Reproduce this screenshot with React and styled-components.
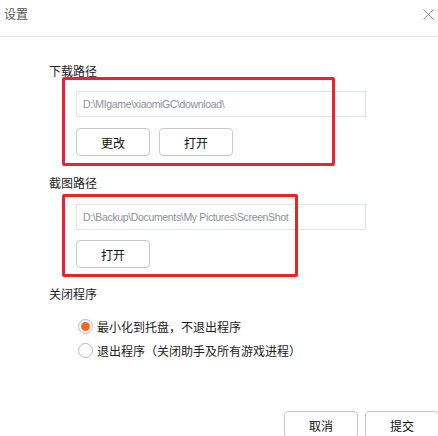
import React from 'react'
import styled, { createGlobalStyle } from 'styled-components'

const GlobalStyle = createGlobalStyle`
    html, body {
        margin: 0;
        padding: 0;
        background: #fff;
        overflow: hidden;
    }
    body {
        font-family: "Noto Sans CJK SC", "Liberation Sans", sans-serif;
        color: #222;
    }
`

const Dialog = styled.div`
    width: 438px;
    height: 436px;
    display: flex;
    flex-direction: column;
    overflow: hidden;
`

const Header = styled.div`
    height: 37px;
    border-bottom: 1px solid #e2e2e2;
    display: flex;
    align-items: flex-start;
    justify-content: space-between;
    padding: 0 4px 0 4px;
    box-sizing: border-box;
    flex-shrink: 0;
`

const Title = styled.div`
    font-size: 12px;
    line-height: 28px;
    color: #555;
`

const Close = styled.button`
    border: none;
    background: transparent;
    padding: 0;
    margin-top: 8px;
    width: 11px;
    height: 11px;
    cursor: pointer;
`

const Content = styled.div`
    padding: 25px 0 0 49px;
    flex: 1;
`

const Label = styled.div`
    font-size: 12px;
    line-height: 18px;
    color: #222;
`

const Group = styled.div`
    position: relative;
    padding: ${props => props.$pad} 0 0 27px;
    margin-bottom: ${props => props.$after};
`

const Highlight = styled.div`
    position: absolute;
    left: 13px;
    top: ${props => props.$top}px;
    width: ${props => props.$w}px;
    height: ${props => props.$h}px;
    border: 3px solid #e5262b;
    border-radius: 2px;
    box-sizing: border-box;
    pointer-events: none;
`

const PathInput = styled.div`
    width: 290px;
    height: 26px;
    border: 1px solid #dfe4e7;
    box-sizing: border-box;
    padding-left: 6px;
    display: flex;
    align-items: center;
    font-family: "Liberation Sans", sans-serif;
    font-size: 10.5px;
    letter-spacing: -0.35px;
    color: #8b9096;
    white-space: nowrap;
`

const ButtonRow = styled.div`
    display: flex;
    gap: 9px;
    margin-top: ${props => props.$gap};
`

const Button = styled.button`
    width: 74px;
    height: 28px;
    background: #fff;
    border: 1px solid #c8c8c8;
    border-radius: 4px;
    font-family: "Noto Sans CJK SC", sans-serif;
    font-size: 12px;
    color: #111;
    padding: 0;
    cursor: pointer;
`

const RadioList = styled.div`
    margin-top: 11px;
    padding-left: 29px;
`

const RadioRow = styled.label`
    display: flex;
    align-items: center;
    height: 24px;
    gap: 4px;
    font-size: 12px;
    color: #222;
`

const RadioMark = styled.span`
    width: 15px;
    height: 15px;
    border-radius: 50%;
    border: 1px solid #b5b5b5;
    box-sizing: border-box;
    display: flex;
    align-items: center;
    justify-content: center;
    background: #fff;
    &::after {
        content: "";
        width: 9px;
        height: 9px;
        border-radius: 50%;
        background: ${props => props.$on ? '#f4692a' : 'transparent'};
    }
`

const Footer = styled.div`
    display: flex;
    justify-content: flex-end;
    gap: 7px;
    margin-top: 49px;
    margin-right: -1px;
`

function App() {
  return (
    <Dialog>
        <GlobalStyle />
        <Header>
            <Title>设置</Title>
            <Close aria-label="close">
                <svg width="11" height="11" viewBox="0 0 11 11">
                    <path d="M0.5 0.5 L10.5 10.5 M10.5 0.5 L0.5 10.5" stroke="#8a8a8a" strokeWidth="1" fill="none" />
                </svg>
            </Close>
        </Header>
        <Content>
            <Label>下载路径</Label>
            <Group $pad="11px" $after="18px">
                <Highlight $top={-3} $w={273} $h={89} />
                <PathInput>D:\MIgame\xiaomiGC\download\</PathInput>
                <ButtonRow $gap="11px">
                    <Button>更改</Button>
                    <Button>打开</Button>
                </ButtonRow>
            </Group>
            <Label>截图路径</Label>
            <Group $pad="12px" $after="17px">
                <Highlight $top={2} $w={236} $h={83} />
                <PathInput>D:\Backup\Documents\My Pictures\ScreenShot</PathInput>
                <ButtonRow $gap="10px">
                    <Button>打开</Button>
                </ButtonRow>
            </Group>
            <Label>关闭程序</Label>
            <RadioList>
                <RadioRow><RadioMark $on />最小化到托盘，不退出程序</RadioRow>
                <RadioRow><RadioMark />退出程序（关闭助手及所有游戏进程）</RadioRow>
            </RadioList>
        </Content>
        <Footer>
            <Button>取消</Button>
            <Button>提交</Button>
        </Footer>
    </Dialog>
  )
}

export default App
